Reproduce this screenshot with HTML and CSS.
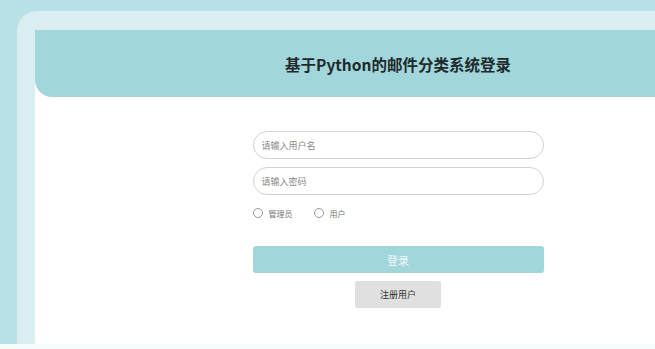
FILE: index.html
```html
<!DOCTYPE html>
<html lang="zh">
<head>
<meta charset="utf-8">
<title>登录</title>
<link rel="stylesheet" href="styles.css">
</head>
<body>
<div class="page">
  <div class="frame">
    <div class="panel">
      <header class="header">
        <h1 class="title">基于Python的邮件分类系统登录</h1>
      </header>
      <form class="form">
        <input class="field" type="text" placeholder="请输入用户名">
        <input class="field" type="password" placeholder="请输入密码">
        <div class="roles">
          <label class="role"><span class="radio"></span>管理员</label>
          <label class="role"><span class="radio"></span>用户</label>
        </div>
        <button type="button" class="btn-login">登录</button>
        <button type="button" class="btn-register">注册用户</button>
      </form>
    </div>
  </div>
</div>
</body>
</html>
```
FILE: styles.css
```css
html, body {
  margin: 0;
  padding: 0;
}
body {
  background: #f6fbfc;
  font-family: "Noto Sans CJK SC", "Noto Sans", sans-serif;
}
.page {
  height: 344px;
  width: 655px;
  overflow: hidden;
  background: #b9e1e6;
  padding: 11px 0 0 17px;
  box-sizing: border-box;
}
.frame {
  width: 760px;
  height: 100%;
  background: #daeef2;
  border-top-left-radius: 20px;
  padding: 19px 0 0 18px;
  box-sizing: border-box;
}
.panel {
  width: 726px;
  height: 100%;
  background: #ffffff;
}
.header {
  height: 67px;
  background: #a1d6db;
  border-bottom-left-radius: 17px;
  display: flex;
  align-items: center;
  justify-content: center;
}
.title {
  margin: 0;
  font-size: 15.5px;
  font-weight: 700;
  color: #1f2a2c;
  padding-top: 1px;
}
.form {
  width: 291px;
  margin: 34px auto 0;
  display: flex;
  flex-direction: column;
}
.field {
  height: 28px;
  box-sizing: border-box;
  border: 1px solid #cfd4d5;
  border-radius: 14px;
  padding: 0 8px;
  font-family: inherit;
  font-size: 9px;
  color: #555;
  outline: none;
  background: #fff;
}
.field + .field {
  margin-top: 8px;
}
.field::placeholder {
  color: #8a8a8a;
}
.roles {
  display: flex;
  gap: 21px;
  margin-top: 12px;
  height: 12px;
  align-items: center;
}
.role {
  display: flex;
  align-items: center;
  gap: 6px;
  font-size: 8px;
  color: #777;
}
.radio {
  width: 8px;
  height: 8px;
  border: 1px solid #9a9a9a;
  border-radius: 50%;
  background: #fff;
}
.btn-login {
  margin-top: 27px;
  height: 27px;
  border: none;
  border-radius: 3px;
  background: #a1d6db;
  color: #eef8f9;
  font-family: inherit;
  font-size: 11px;
  padding: 0;
}
.btn-register {
  align-self: center;
  margin-top: 8px;
  width: 86px;
  height: 27px;
  border: none;
  border-radius: 2px;
  background: #e0e0e0;
  color: #333;
  font-family: inherit;
  font-size: 9px;
  padding: 0;
}
```
